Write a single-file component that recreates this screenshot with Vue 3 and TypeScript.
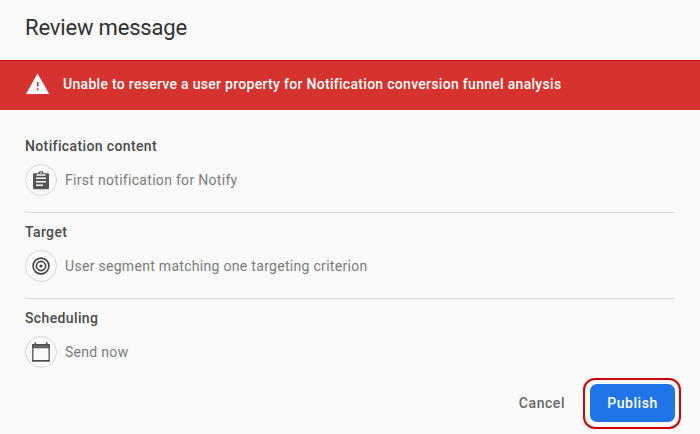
<script setup lang="ts">
interface Section {
  title: string
  icon: 'clipboard' | 'target' | 'calendar'
  text: string
}

const sections: Section[] = [
  { title: 'Notification content', icon: 'clipboard', text: 'First notification for Notify' },
  { title: 'Target', icon: 'target', text: 'User segment matching one targeting criterion' },
  { title: 'Scheduling', icon: 'calendar', text: 'Send now' },
]
</script>

<template>
  <main class="dialog">
    <h1 class="heading">Review message</h1>

    <div class="banner" role="alert">
      <svg class="warning" width="24" height="22" viewBox="0 0 24 22">
        <path d="M11.500 0.500 L23.300 21 H0 Z" fill="#fff" />
        <path d="M10.900 9h1.700v4.500h-1.700zM10.900 15.200h1.700v2h-1.700z" fill="#d63230" />
      </svg>
      <span class="banner-text">Unable to reserve a user property for Notification conversion funnel analysis</span>
    </div>

    <div class="sections">
      <section v-for="s in sections" :key="s.title" class="section">
        <h2 class="title">{{ s.title }}</h2>
        <div class="row">
          <span class="badge">
            <svg v-if="s.icon === 'clipboard'" width="18" height="20" viewBox="0 0 18 20">
              <path d="M2 3.200H6.200a2.900 2.900 0 0 1 5.600 0H16a1 1 0 0 1 1 1v14a1 1 0 0 1-1 1H2a1 1 0 0 1-1-1v-14a1 1 0 0 1 1-1Z" fill="#555" />
              <path d="M4.500 5h9M4 8.300h10M4 11.700h10M4 15.200h7" stroke="#fafafa" stroke-width="1.500" />
              <circle cx="9" cy="2.900" r=".8" fill="#fafafa" />
            </svg>
            <svg v-else-if="s.icon === 'target'" width="18" height="18" viewBox="0 0 18 18">
              <g fill="none" stroke="#444" stroke-width="1.600">
                <circle cx="9" cy="9" r="7.900" />
                <circle cx="9" cy="9" r="4.600" />
              </g>
              <circle cx="9" cy="9" r="1.600" fill="#444" />
            </svg>
            <svg v-else width="18" height="20" viewBox="0 0 18 20">
              <path d="M.8 3h16.400v15.800H.8Z" fill="none" stroke="#686868" stroke-width="1.500" />
              <path d="M0 2h18v4.300H0ZM2.500 .3h1.500v3H2.500ZM14 .3h1.500v3H14Z" fill="#555" />
              <path d="M2.500 4.500h13" stroke="#999" stroke-dasharray="1 1" />
              <path d="M0 18.800h18" stroke="#4a4a4a" stroke-width="1.300" />
            </svg>
          </span>
          <span class="text">{{ s.text }}</span>
        </div>
      </section>
    </div>

    <footer class="actions">
      <button class="cancel" type="button">Cancel</button>
      <div class="ring">
        <button class="publish" type="button">Publish</button>
      </div>
    </footer>
  </main>
</template>

<style>
body {
  background: #fafafa;
}
</style>

<style scoped>
.dialog {
  box-sizing: border-box;
  width: 700px;
  height: 434px;
  overflow: hidden;
  background: #fafafa;
  font-family: Roboto, "Liberation Sans", sans-serif;
}
.heading {
  box-sizing: border-box;
  height: 60px;
  margin: 0;
  padding: 14px 25px 0;
  font-size: 22px;
  line-height: 28px;
  font-weight: 400;
  letter-spacing: -0.17px;
  color: #303030;
}
.banner {
  box-sizing: border-box;
  display: flex;
  align-items: center;
  gap: 13px;
  height: 50px;
  padding: 0 26px;
  background: #d63230;
  border-top: 1px solid #dc0000;
}
.warning {
  flex: none;
  margin-bottom: 3px;
}
.banner-text {
  margin-bottom: 3px;
  color: #fff;
  font-size: 14px;
  font-weight: 500;
  line-height: 20px;
  letter-spacing: 0.295px;
  white-space: nowrap;
}
.sections {
  padding: 27px 25px 0;
}
.section {
  box-sizing: border-box;
  height: 86px;
}
.section:not(:last-child) {
  height: 76px;
  margin-bottom: 10px;
  border-bottom: 1px solid #dcd8da;
}
.title {
  margin: 0;
  font-size: 14px;
  font-weight: 500;
  line-height: 18px;
  letter-spacing: 0.37px;
  color: #4a4a4a;
}
.row {
  display: flex;
  align-items: center;
  gap: 8px;
  height: 32px;
  margin-top: 9px;
}
.badge {
  box-sizing: border-box;
  flex: none;
  display: flex;
  align-items: center;
  justify-content: center;
  width: 32px;
  height: 32px;
  border: 1px solid #dcd6d9;
  border-radius: 50%;
}
.text {
  font-size: 14px;
  line-height: 20px;
  letter-spacing: 0.3px;
  color: #7a7a7a;
}
.actions {
  display: flex;
  justify-content: flex-end;
  align-items: center;
  gap: 18px;
  margin-top: -17px;
  padding-right: 19px;
}
button {
  padding: 0;
  border: 0;
  background: none;
  font: 500 14px/20px Roboto, "Liberation Sans", sans-serif;
  letter-spacing: 0.55px;
}
.cancel {
  margin-bottom: 2px;
  color: #686868;
}
.ring {
  box-sizing: border-box;
  width: 98px;
  height: 51px;
  padding: 4px 5px;
  border: 2px solid #d50000;
  border-radius: 12px;
}
.publish {
  display: block;
  width: 85px;
  height: 38px;
  border-radius: 7px;
  background: #1f74e8;
  color: #fff;
}
</style>
